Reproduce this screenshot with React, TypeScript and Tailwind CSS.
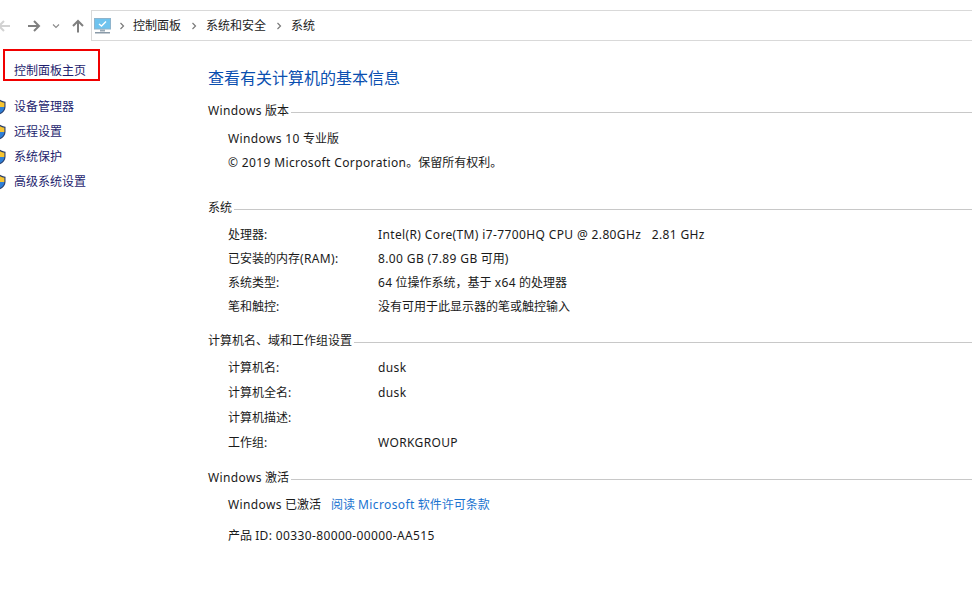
const font = "font-['Noto_Sans','Noto_Sans_CJK_SC',sans-serif]"

// the reference's Latin runs wider than Noto Sans, CJK width is the same
function L({ children }: { children: string }) {
  return <span className="tracking-[0.37px]">{children}</span>
}

function Shield() {
  return (
    <svg width="13" height="16" viewBox="0 0 13 16" className="shrink-0">
      <path d="M6.5 0.5 C4.5 2 2.5 2.6 0.5 2.8 V8 C0.5 11.5 3 14 6.5 15.5 C10 14 12.5 11.5 12.5 8 V2.8 C10.5 2.6 8.5 2 6.5 0.5 Z" fill="#2a3f6d" />
      <path d="M6.5 2 V8 H1.6 V3.8 C3.4 3.6 5 3 6.5 2 Z" fill="#2f7fd6" />
      <path d="M6.5 2 C8 3 9.6 3.6 11.4 3.8 V8 H6.5 Z" fill="#f7c531" />
      <path d="M1.6 8 H6.5 V14.2 C3.6 13 1.7 10.8 1.6 8 Z" fill="#f7c531" />
      <path d="M6.5 8 H11.4 C11.3 10.8 9.4 13 6.5 14.2 Z" fill="#2f7fd6" />
    </svg>
  )
}

function Chevron() {
  return (
    <svg width="6" height="8" viewBox="0 0 6 8" className="shrink-0">
      <path d="M1.5 1 L4.5 4 L1.5 7" fill="none" stroke="#7a7a7a" strokeWidth="1.2" />
    </svg>
  )
}

function Arrow({ color, dir }: { color: string; dir: "left" | "right" | "up" }) {
  const d =
    dir === "left"
      ? "M13 7 H2 M7 2 L2 7 L7 12"
      : dir === "right"
        ? "M1 7 H12 M7 2 L12 7 L7 12"
        : "M7 13.5 V2 M2 7 L7 2 L12 7"
  return (
    <svg width="14" height="14" viewBox="0 0 14 14" className="shrink-0">
      <path d={d} fill="none" stroke={color} strokeWidth="2" />
    </svg>
  )
}

function Monitor() {
  return (
    <svg width="17" height="16" viewBox="0 0 17 16" className="shrink-0">
      <rect x="0.5" y="0.5" width="16" height="10.5" fill="#6fc3ee" stroke="#8fb4cc" />
      <path d="M5 6 L7.5 8 L12 3.5" fill="none" stroke="#ffffff" strokeWidth="1.4" />
      <rect x="6" y="11.5" width="5" height="2" fill="#9aa9b5" />
      <rect x="1" y="14" width="15" height="1.5" fill="#8a9aa8" />
    </svg>
  )
}

function SectionTitle({ children, className }: { children: React.ReactNode; className: string }) {
  return (
    <div className={`flex h-5 items-center ${className}`}>
      <span className="leading-5">{children}</span>
      <div className="mt-[3px] ml-[2px] h-px flex-1 bg-[#c8c8c8]" />
    </div>
  )
}

function Row({ label, value, className }: { label: React.ReactNode; value?: React.ReactNode; className?: string }) {
  return (
    <div className={`flex h-5 items-center pl-5 leading-5 ${className ?? ""}`}>
      <span className="w-[150px] shrink-0">{label}</span>
      {value && <span className="whitespace-pre">{value}</span>}
    </div>
  )
}

const sideLinks = ["设备管理器", "远程设置", "系统保护", "高级系统设置"]

export default function App() {
  return (
    <div className={`${font} h-[598px] w-[972px] overflow-hidden bg-white text-[12px] text-[#1a1a1a]`}>
      {/* toolbar */}
      <div className="flex h-[41px] items-start pt-[10px]">
        <div className="flex h-[31px] w-[91px] shrink-0 items-center">
          <div className="-ml-[3px]">
            <Arrow color="#d2d2d2" dir="left" />
          </div>
          <div className="ml-[16px]">
            <Arrow color="#7f7f7f" dir="right" />
          </div>
          <svg width="8" height="6" viewBox="0 0 8 6" className="ml-[11px]">
            <path d="M1 1.5 L4 4.5 L7 1.5" fill="none" stroke="#8a8a8a" strokeWidth="1.1" />
          </svg>
          <div className="ml-[11px]">
            <Arrow color="#7f7f7f" dir="up" />
          </div>
        </div>
        <div className="flex h-[31px] flex-1 items-center border-t border-b border-l border-[#d9d9d9] pl-[2px] text-[#222222]">
          <Monitor />
          <div className="ml-[8px]"><Chevron /></div>
          <span className="ml-[8px]">控制面板</span>
          <div className="ml-[10px]"><Chevron /></div>
          <span className="ml-[9px]">系统和安全</span>
          <div className="ml-[10px]"><Chevron /></div>
          <span className="ml-[9px]">系统</span>
        </div>
      </div>

      <div className="flex">
        {/* sidebar */}
        <div className="w-[208px] shrink-0">
          <div className="mt-[8px] ml-[3px] flex h-[32px] w-[97px] items-end border-2 border-[#f00000] pl-[9px] text-[#1e1e6e]">
            <span className="leading-4">控制面板主页</span>
          </div>
          <div className="mt-[16px] flex flex-col gap-[5px]">
            {sideLinks.map((link) => (
              <div key={link} className="flex h-5 items-center text-[#1e1e6e]">
                <div className="-ml-[7px] mr-[8px]">
                  <Shield />
                </div>
                <span>{link}</span>
              </div>
            ))}
          </div>
        </div>

        {/* main */}
        <div className="flex-1">
          <h1 className="mt-[25px] text-[16px] leading-6 font-normal text-[#0a4fb0]">查看有关计算机的基本信息</h1>
          <SectionTitle className="mt-[11px]"><L>Windows</L> 版本</SectionTitle>
          <Row label={<><L>Windows 10</L> 专业版</>} className="mt-[8px] [&>span]:w-auto" />
          <Row label={<><L>© 2019 Microsoft Corporation</L>。保留所有权利。</>} className="mt-[4px] [&>span]:w-auto" />

          <SectionTitle className="mt-[25px]">系统</SectionTitle>
          <Row label="处理器:" value={<L>Intel(R) Core(TM) i7-7700HQ CPU @ 2.80GHz   2.81 GHz</L>} className="mt-[7px]" />
          <Row label={<>已安装的内存<L>(RAM):</L></>} value={<><L>8.00 GB (7.89 GB</L> 可用<L>)</L></>} className="mt-[4px]" />
          <Row label="系统类型:" value={<><L>64</L> 位操作系统，基于 <L>x64</L> 的处理器</>} className="mt-[4px]" />
          <Row label="笔和触控:" value="没有可用于此显示器的笔或触控输入" className="mt-[4px]" />

          <SectionTitle className="mt-[14px]">计算机名、域和工作组设置</SectionTitle>
          <Row label="计算机名:" value={<L>dusk</L>} className="mt-[7px]" />
          <Row label="计算机全名:" value={<L>dusk</L>} className="mt-[5px]" />
          <Row label="计算机描述:" className="mt-[5px]" />
          <Row label="工作组:" value={<L>WORKGROUP</L>} className="mt-[5px]" />

          <SectionTitle className="mt-[15px]"><L>Windows</L> 激活</SectionTitle>
          <div className="mt-[7px] flex h-5 items-center pl-5">
            <span><L>Windows</L> 已激活</span>
            <a className="ml-[10px] text-[#1a73d0]">阅读 <L>Microsoft</L> 软件许可条款</a>
          </div>
          <Row label={<>产品 <L>ID: 00330-80000-00000-AA515</L></>} className="mt-[11px] [&>span]:w-auto" />
        </div>
      </div>
    </div>
  )
}
